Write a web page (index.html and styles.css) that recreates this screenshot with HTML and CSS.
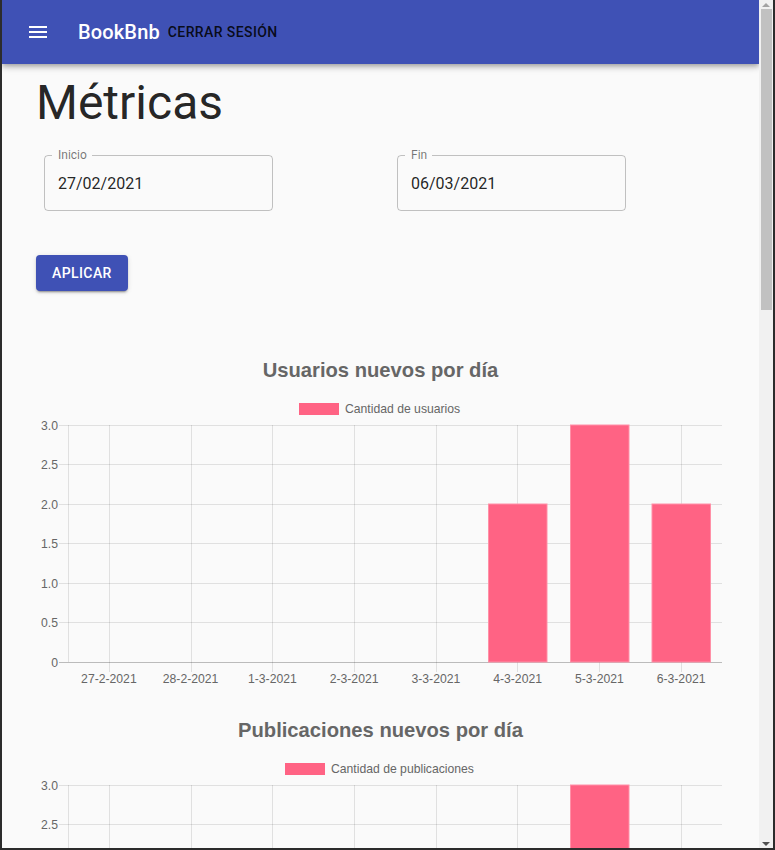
FILE: index.html
```html
<!DOCTYPE html>
<html lang="es">
<head>
<meta charset="utf-8">
<title>BookBnb - Métricas</title>
<link rel="stylesheet" href="styles.css">
</head>
<body>
<div class="viewport">
  <header class="appbar">
    <button class="menu-btn" aria-label="menu">
      <svg class="menu-icon" viewBox="0 0 24 24"><path d="M3 18h18v-2H3v2zm0-5h18v-2H3v2zm0-7v2h18V6H3z"/></svg>
    </button>
    <div class="brand">BookBnb</div>
    <button class="logout">CERRAR SESIÓN</button>
  </header>
  <main class="content">
    <h1 class="page-title">Métricas</h1>
    <div class="fields">
      <div class="field-col">
        <fieldset class="field">
          <legend class="field-label">Inicio</legend>
          <div class="field-value">27/02/2021</div>
        </fieldset>
      </div>
      <div class="field-col">
        <fieldset class="field">
          <legend class="field-label">Fin</legend>
          <div class="field-value">06/03/2021</div>
        </fieldset>
      </div>
    </div>
    <button class="apply">APLICAR</button>

    <svg class="chart" viewBox="0 0 706 360">
      <text class="c-title" x="344.5" y="47" text-anchor="middle">Usuarios nuevos por día</text>
      <rect class="c-legend" x="263" y="73" width="40" height="12"/>
      <text class="c-tick" x="309" y="83">Cantidad de usuarios</text>
      <g class="grid">
        <line x1="23" y1="95.5" x2="686" y2="95.5"/>
        <line x1="23" y1="134.5" x2="686" y2="134.5"/>
        <line x1="23" y1="174.5" x2="686" y2="174.5"/>
        <line x1="23" y1="213.5" x2="686" y2="213.5"/>
        <line x1="23" y1="253.5" x2="686" y2="253.5"/>
        <line x1="23" y1="292.5" x2="686" y2="292.5"/>
        <line x1="32.5" y1="95" x2="32.5" y2="332"/>
        <line x1="73.5" y1="95" x2="73.5" y2="342"/>
        <line x1="155.5" y1="95" x2="155.5" y2="342"/>
        <line x1="236.5" y1="95" x2="236.5" y2="342"/>
        <line x1="318.5" y1="95" x2="318.5" y2="342"/>
        <line x1="400.5" y1="95" x2="400.5" y2="342"/>
        <line x1="481.5" y1="95" x2="481.5" y2="342"/>
        <line x1="563.5" y1="95" x2="563.5" y2="342"/>
        <line x1="645.5" y1="95" x2="645.5" y2="342"/>
      </g>
      <line class="zero" x1="23" y1="332.5" x2="686" y2="332.5"/>
      <g class="bars">
        <rect x="452.5" y="174" width="58.5" height="158"/>
        <rect x="534.5" y="95" width="58.5" height="237"/>
        <rect x="616" y="174" width="58.5" height="158"/>
      </g>
      <g class="c-tick" text-anchor="end">
        <text x="22" y="99.5">3.0</text>
        <text x="22" y="139">2.5</text>
        <text x="22" y="178.5">2.0</text>
        <text x="22" y="218">1.5</text>
        <text x="22" y="257.5">1.0</text>
        <text x="22" y="297">0.5</text>
        <text x="22" y="336.5">0</text>
      </g>
      <g class="c-tick" text-anchor="middle">
        <text x="72.9" y="353">27-2-2021</text>
        <text x="154.6" y="353">28-2-2021</text>
        <text x="236.4" y="353">1-3-2021</text>
        <text x="318.1" y="353">2-3-2021</text>
        <text x="399.9" y="353">3-3-2021</text>
        <text x="481.6" y="353">4-3-2021</text>
        <text x="563.4" y="353">5-3-2021</text>
        <text x="645.1" y="353">6-3-2021</text>
      </g>
    </svg>

    <svg class="chart" viewBox="0 0 706 360">
      <text class="c-title" x="344.5" y="47" text-anchor="middle">Publicaciones nuevos por día</text>
      <rect class="c-legend" x="249" y="73" width="40" height="12"/>
      <text class="c-tick" x="295" y="83">Cantidad de publicaciones</text>
      <g class="grid">
        <line x1="23" y1="95.5" x2="686" y2="95.5"/>
        <line x1="23" y1="134.5" x2="686" y2="134.5"/>
        <line x1="23" y1="174.5" x2="686" y2="174.5"/>
        <line x1="23" y1="213.5" x2="686" y2="213.5"/>
        <line x1="23" y1="253.5" x2="686" y2="253.5"/>
        <line x1="23" y1="292.5" x2="686" y2="292.5"/>
        <line x1="32.5" y1="95" x2="32.5" y2="332"/>
        <line x1="73.5" y1="95" x2="73.5" y2="342"/>
        <line x1="155.5" y1="95" x2="155.5" y2="342"/>
        <line x1="236.5" y1="95" x2="236.5" y2="342"/>
        <line x1="318.5" y1="95" x2="318.5" y2="342"/>
        <line x1="400.5" y1="95" x2="400.5" y2="342"/>
        <line x1="481.5" y1="95" x2="481.5" y2="342"/>
        <line x1="563.5" y1="95" x2="563.5" y2="342"/>
        <line x1="645.5" y1="95" x2="645.5" y2="342"/>
      </g>
      <line class="zero" x1="23" y1="332.5" x2="686" y2="332.5"/>
      <g class="bars">
        <rect x="452.5" y="253" width="58.5" height="79"/>
        <rect x="534.5" y="95" width="58.5" height="237"/>
        <rect x="616" y="174" width="58.5" height="158"/>
      </g>
      <g class="c-tick" text-anchor="end">
        <text x="22" y="99.5">3.0</text>
        <text x="22" y="139">2.5</text>
        <text x="22" y="178.5">2.0</text>
        <text x="22" y="218">1.5</text>
        <text x="22" y="257.5">1.0</text>
        <text x="22" y="297">0.5</text>
        <text x="22" y="336.5">0</text>
      </g>
      <g class="c-tick" text-anchor="middle">
        <text x="72.9" y="353">27-2-2021</text>
        <text x="154.6" y="353">28-2-2021</text>
        <text x="236.4" y="353">1-3-2021</text>
        <text x="318.1" y="353">2-3-2021</text>
        <text x="399.9" y="353">3-3-2021</text>
        <text x="481.6" y="353">4-3-2021</text>
        <text x="563.4" y="353">5-3-2021</text>
        <text x="645.1" y="353">6-3-2021</text>
      </g>
    </svg>
  </main>
</div>
<div class="scrollbar" aria-hidden="true">
  <div class="sb-btn"><span class="arrow-up"></span></div>
  <div class="sb-thumb"></div>
  <div class="sb-space"></div>
  <div class="sb-btn"><span class="arrow-down"></span></div>
</div>
</body>
</html>
```

FILE: styles.css
```css
* { box-sizing: border-box; }

html, body {
  margin: 0;
  height: 850px;
  overflow: hidden;
}

body {
  display: flex;
  border-left: 2px solid #2c2c2c;
  border-right: 2px solid #2c2c2c;
  border-bottom: 2px solid #2c2c2c;
  background: #fafafa;
  font-family: Roboto, "Liberation Sans", sans-serif;
}

.viewport {
  flex: 1;
  min-width: 0;
  overflow: hidden;
  background: #fafafa;
}

/* App bar */
.appbar {
  position: relative;
  z-index: 2;
  height: 64px;
  display: flex;
  align-items: center;
  padding: 0 24px;
  background: #3f51b5;
  box-shadow: 0 2px 4px -1px rgba(0,0,0,.2), 0 4px 5px 0 rgba(0,0,0,.14), 0 1px 10px 0 rgba(0,0,0,.12);
}

.menu-btn {
  width: 48px;
  height: 48px;
  padding: 12px;
  margin-left: -12px;
  margin-right: 16px;
  border: 0;
  background: transparent;
  display: flex;
}

.menu-icon {
  width: 24px;
  height: 24px;
  fill: #fff;
}

.brand {
  color: #fff;
  font-size: 20px;
  font-weight: 500;
  line-height: 1.6;
  letter-spacing: 0.0075em;
}

.logout {
  border: 0;
  background: transparent;
  padding: 6px 8px;
  font-family: Roboto, sans-serif;
  font-size: 14px;
  font-weight: 500;
  line-height: 1.75;
  letter-spacing: 0.02857em;
  color: rgba(0,0,0,0.87);
}

/* Content */
.content {
  padding: 11px 17px 0 34px;
}

.page-title {
  margin: 0;
  font-size: 48px;
  font-weight: 400;
  line-height: 56px;
  color: rgba(0,0,0,0.87);
}

.fields {
  display: grid;
  grid-template-columns: 353px 353px;
  margin-top: 18px;
}

.field-col {
  padding-left: 8px;
}

.field {
  width: 229px;
  height: 62px;
  margin: 0;
  padding: 0;
  border: 1px solid rgba(0,0,0,0.23);
  border-radius: 4px;
}

.field-label {
  margin-left: 7px;
  padding: 0 5px 0 6px;
  font-size: 12px;
  line-height: 12px;
  color: rgba(0,0,0,0.54);
}

.field-value {
  padding: 13px 0 0 13px;
  font-size: 16px;
  line-height: 19px;
  color: rgba(0,0,0,0.87);
}

.apply {
  display: block;
  margin-top: 44px;
  height: 36px;
  min-width: 64px;
  padding: 6px 16px;
  border: 0;
  border-radius: 4px;
  background: #3f51b5;
  color: #fff;
  font-family: Roboto, sans-serif;
  font-size: 14px;
  font-weight: 500;
  line-height: 24px;
  letter-spacing: 0.02857em;
  box-shadow: 0 3px 1px -2px rgba(0,0,0,.2), 0 2px 2px 0 rgba(0,0,0,.14), 0 1px 5px 0 rgba(0,0,0,.12);
}

/* Charts */
.chart {
  display: block;
  width: 706px;
  height: 360px;
}

.chart:first-of-type {
  margin-top: 39px;
}

.c-title {
  font-family: "Liberation Sans", Arial, sans-serif;
  font-size: 20.2px;
  font-weight: 700;
  fill: #666;
}

.c-tick {
  font-family: "Liberation Sans", Arial, sans-serif;
  font-size: 12.2px;
  fill: #666;
}

.c-legend {
  fill: #ff6384;
}

.grid line {
  stroke: rgba(0,0,0,0.1);
  stroke-width: 1;
}

.zero {
  stroke: rgba(0,0,0,0.25);
  stroke-width: 1;
}

.bars rect {
  fill: #ff6384;
  stroke: #ff90a7;
  stroke-width: 1;
}

/* Scrollbar */
.scrollbar {
  width: 14px;
  flex: none;
  display: flex;
  flex-direction: column;
  background: #f1f1f1;
}

.sb-btn {
  height: 9px;
  display: flex;
  align-items: center;
  justify-content: center;
}

.sb-thumb {
  height: 301px;
  width: 11px;
  margin-left: 2px;
  background: #c1c1c1;
}

.sb-space {
  flex: 1;
}

.arrow-up {
  width: 0;
  height: 0;
  border-left: 4px solid transparent;
  border-right: 4px solid transparent;
  border-bottom: 4px solid #a3a3a3;
}

.arrow-down {
  width: 0;
  height: 0;
  border-left: 4px solid transparent;
  border-right: 4px solid transparent;
  border-top: 4px solid #505050;
}
```
